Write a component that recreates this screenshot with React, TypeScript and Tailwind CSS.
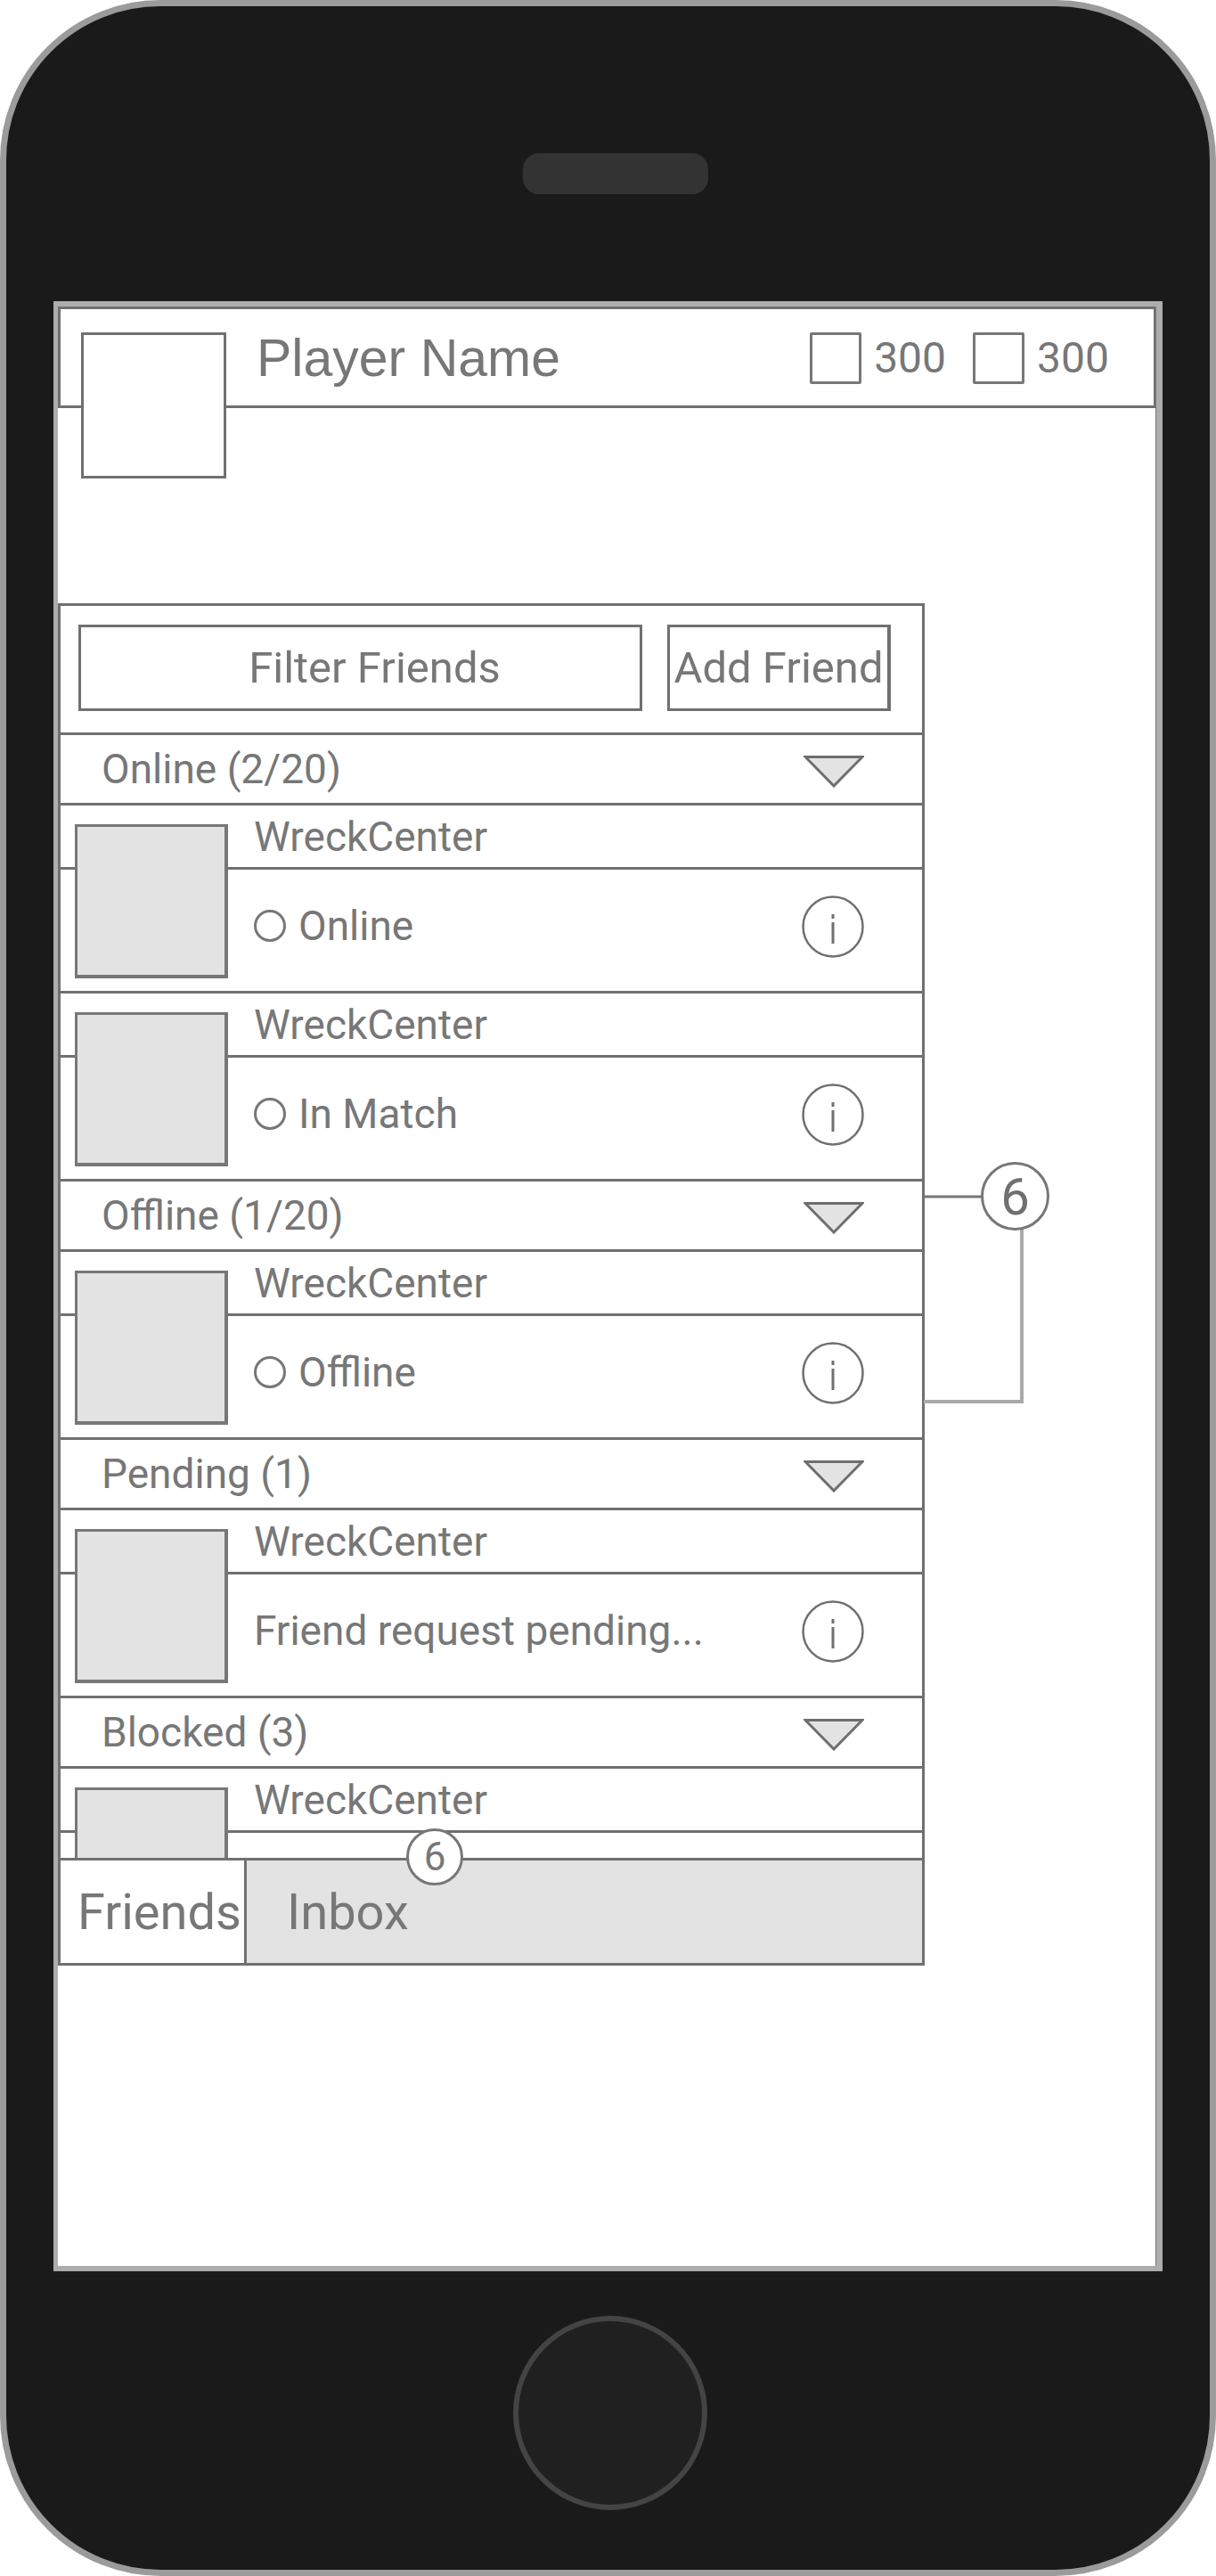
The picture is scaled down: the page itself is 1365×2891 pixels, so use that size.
const roboto = "font-['Roboto',sans-serif]";

function InfoIcon() {
  return (
    <svg width="70" height="70" viewBox="0 0 70 70" className="shrink-0">
      <circle cx="35" cy="35" r="33.5" fill="none" stroke="#707070" strokeWidth="2.5" />
      <rect x="33.5" y="21" width="3" height="5" fill="#707070" />
      <rect x="33.5" y="30" width="3" height="24" fill="#707070" />
    </svg>
  );
}

function Caret() {
  return (
    <svg width="68" height="36" viewBox="0 0 68 36" className="mt-[5px] shrink-0">
      <polygon points="2,1.5 66,1.5 34,34" fill="#e3e3e3" stroke="#6e6e6e" strokeWidth="3" />
    </svg>
  );
}

function Section({ label }: { label: string }) {
  return (
    <div className="flex h-[79px] shrink-0 items-center justify-between border-b-[3px] border-[#707070] pl-[46px] pr-[65px]">
      <span className="text-[46px] leading-none text-[#777]">{label}</span>
      <Caret />
    </div>
  );
}

function Friend({ status, dot = true, short = false }: { status: string; dot?: boolean; short?: boolean }) {
  return (
    <div className={`relative shrink-0 ${short ? "h-[103px]" : "h-[211px]"}`}>
      <div className={`absolute left-[16px] top-[21px] w-[172px] border-[3px] border-r-4 border-[#777] bg-[#e3e3e3] ${short ? "h-[81px] border-b-0" : "h-[173px] border-b-4"}`} />
      <div className="flex h-[72px] items-center border-b-[3px] border-[#707070] pl-[217px] text-[46px] leading-none text-[#777]">
        WreckCenter
      </div>
      {!short && (
        <div className="flex h-[139px] items-center justify-between border-b-[3px] border-[#707070] pb-[8px] pl-[217px] pr-[65px]">
          <div className="mb-[3px] flex items-center gap-[14px] text-[46px] leading-none text-[#777]">
            {dot && <span className="h-[36px] w-[36px] rounded-full border-[3px] border-[#777]" />}
            <span>{status}</span>
          </div>
          <InfoIcon />
        </div>
      )}
    </div>
  );
}

function Currency() {
  return (
    <div className="flex items-center gap-[14px]">
      <span className="h-[58px] w-[58px] rounded-[2px] border-[3px] border-[#777]" />
      <span className={`${roboto} text-[48px] leading-none text-[#777]`}>300</span>
    </div>
  );
}

export default function App() {
  return (
    <div className="h-[2891px] w-[1365px] bg-white">
      <div className="flex h-full flex-col items-center rounded-[180px] border-[7px] border-[#9b9b9b] bg-[#1a1a1a]">
        <div className="mt-[165px] ml-[16px] h-[46px] w-[208px] shrink-0 rounded-[18px] bg-[#333]" />

        <div className="mt-[120px] h-[2211px] w-[1245px] shrink-0 border-y-[6px] border-r-[7px] border-l-[5px] border-[#adadad] bg-white">
          <div className="flex h-full flex-col border-r border-[#777]">
            {/* Top bar */}
            <div className="relative flex h-[114px] shrink-0 items-start justify-between border-[3px] border-r-2 border-[#707070] pl-[220px] pr-[50px]">
              <span className="mt-[26px] font-['Liberation_Sans',sans-serif] text-[59px] leading-none text-[#777]">
                Player Name
              </span>
              <div className="mt-[26px] flex gap-[30px]">
                <Currency />
                <Currency />
              </div>
              <div className="absolute left-[23px] top-[26px] h-[164px] w-[163px] border-[3px] border-[#707070] bg-white" />
            </div>

            {/* Friends panel */}
            <div className={`${roboto} relative mt-[219px] flex h-[1529px] w-[973px] flex-col border-[3px] border-[#707070] bg-white`}>
              <div className="flex h-[145px] shrink-0 items-center gap-[28px] border-b-[3px] border-[#707070] pb-[3px] pl-[20px]">
                <div className="flex h-[97px] w-[633px] items-center justify-center border-[3px] border-[#707070] pl-[32px] text-[49px] leading-none text-[#777]">
                  Filter Friends
                </div>
                <div className="flex h-[97px] w-[251px] items-center justify-center whitespace-nowrap border-[3px] border-r-4 border-[#707070] text-[49px] leading-none text-[#777]">
                  Add Friend
                </div>
              </div>

              <div className="flex min-h-0 flex-1 flex-col overflow-hidden">
                <Section label="Online (2/20)" />
                <Friend status="Online" />
                <Friend status="In Match" />
                <Section label="Offline (1/20)" />
                <Friend status="Offline" />
                <Section label="Pending (1)" />
                <Friend status="Friend request pending..." dot={false} />
                <Section label="Blocked (3)" />
                <Friend status="" short />
              </div>

              {/* Tabs */}
              <div className="relative flex h-[118px] shrink-0 border-t-[3px] border-[#707070]">
                <div className="flex w-[209px] items-center border-r-[3px] border-[#707070] pl-[19px] text-[56px] leading-none text-[#777]">
                  Friends
                </div>
                <div className="flex flex-1 items-center bg-[#e3e3e3] pl-[45px] text-[56px] leading-none text-[#777]">
                  Inbox
                </div>
                <div className="absolute left-[388px] top-[-36px] flex h-[64px] w-[64px] items-center justify-center rounded-full border-[3px] border-[#777] bg-white text-[44px] leading-none text-[#777]">
                  6
                </div>
              </div>

              {/* Bracket marker */}
              <svg width="120" height="240" viewBox="0 0 120 240" className="absolute left-[966px] top-[660px]">
                <path d="M3 3H70" fill="none" stroke="#777" strokeWidth="3" />
                <path d="M113 40V233H3" fill="none" stroke="#aaa" strokeWidth="4" />
              </svg>
              <div className="absolute left-[1033px] top-[624px] flex h-[77px] w-[77px] items-center justify-center rounded-full border-[3px] border-[#777] bg-white text-[58px] leading-none text-[#707070]">
                6
              </div>
            </div>
          </div>
        </div>

        <div className="mt-[50px] ml-[4px] h-[218px] w-[218px] shrink-0 rounded-full border-[6px] border-[#444] bg-[#202020]" />
      </div>
    </div>
  );
}
